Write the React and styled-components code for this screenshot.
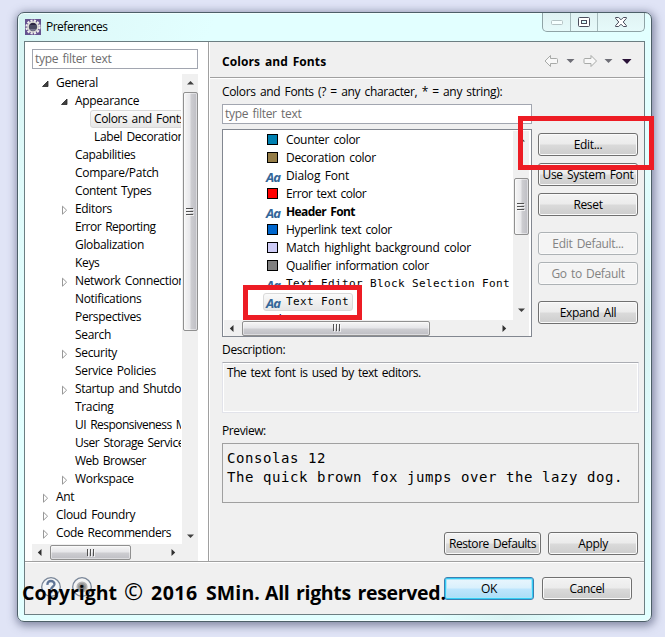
import React from 'react';
import styled, { createGlobalStyle, css } from 'styled-components';

const Global = createGlobalStyle`
  * { box-sizing: border-box; }
  html, body { margin: 0; }
  body {
    height: 637px;
    overflow: hidden;
    background: #e0e4f6;
    color: #000;
    font: 12px/18px "Open Sans", "Noto Sans", sans-serif;
    letter-spacing: -0.33px;
    word-spacing: 1.5px;
    white-space: pre;
  }
`;

const Desktop = styled.div`
  position: relative;
  width: 665px;
  height: 637px;
  padding: 12px 0 0 17px;
`;

const Window = styled.div`
  display: flex;
  flex-direction: column;
  width: 635px;
  height: 610px;
  padding: 0 6px 6px;
  border: 1px solid #4d5f68;
  border-radius: 7px;
  background: linear-gradient(115deg, #d6f3f2 0, #dffafa 9%, #e2ffff 22%, #e2ffff 76%, #d9f3f3 84%, #e2ffff 93%);
  box-shadow: inset 0 0 0 1px #f0ffff, 1px 2px 9px 2px rgba(60, 68, 100, 0.55);
`;

const TitleBar = styled.div`
  display: flex;
  height: 28px;
  flex: none;
`;

const TitleText = styled.div`
  flex: 1;
  padding: 5px 0 0 5px;
  letter-spacing: -0.5px;
`;

const TitleIcon = styled.svg`
  width: 16px;
  height: 16px;
  margin: 6px 0 0 1px;
`;

const Controls = styled.div`
  display: flex;
  width: 103px;
  height: 19px;
  border: 1px solid #8fa3a6;
  border-top: 0;
  border-radius: 0 0 5px 5px;
  background: linear-gradient(#e0f2f3, #e6fafa);
`;

const Control = styled.div`
  display: flex;
  align-items: center;
  justify-content: center;
  width: ${(p) => p.$w}px;
  border-right: ${(p) => (p.$last ? 0 : '1px solid #a5babc')};
`;

const Body = styled.div`
  display: flex;
  flex-direction: column;
  width: 621px;
  height: 574px;
  border: 1px solid #6c7e82;
  background: #f0f0f0;
`;

const Panes = styled.div`
  display: flex;
  height: 519px;
  flex: none;
`;

const Sidebar = styled.div`
  width: 184px;
  padding: 7px 10px 0 7px;
  border-right: 1px solid #a0a0a0;
  background: #fff;
`;

const FilterBox = styled.div`
  height: 20px;
  padding: 0 2px;
  border: 1px solid #a2a6b0;
  background: #fff;
  color: #6d6d6d;
  line-height: 18px;
  letter-spacing: -0.3px;
`;

const TreeGrid = styled.div`
  display: grid;
  grid-template-columns: 150px 16px;
  grid-template-rows: 470px 17px;
  margin-top: 5px;
`;

const TreeRows = styled.div`
  overflow: hidden;
  width: 149px;
`;

const TreeRow = styled.div`
  display: flex;
  align-items: center;
  height: 18px;
  padding-left: ${(p) => 7 + 19 * p.$level}px;
`;

const Twisty = styled.svg`
  flex: none;
  width: 9px;
  height: 10px;
  margin: 2px 4px 0 2px;
`;

const TreeLabel = styled.span`
  flex: none;
  height: 18px;
  padding: 0 4px 0 3px;
  margin-left: -2px;
  border: 1px solid transparent;
  border-radius: 3px;
  line-height: 16px;
  letter-spacing: ${(p) => p.$ls || 'inherit'};
  ${(p) =>
    p.$selected &&
    css`
      border-color: #d9d9d9;
      background: linear-gradient(#fafafa, #e6e6e6);
    `}
`;

const VScroll = styled.div`
  display: flex;
  flex-direction: column;
  align-items: center;
  background: #f0f0f0;
`;

const VArrow = styled.svg`
  flex: none;
  width: 9px;
  height: 5px;
  margin-top: ${(p) => p.$mt}px;
`;

const VThumb = styled.div`
  display: flex;
  align-items: center;
  justify-content: center;
  flex: none;
  width: 15px;
  height: ${(p) => p.$h}px;
  margin-top: ${(p) => p.$mt}px;
  border: 1px solid #909090;
  border-radius: 2px;
  background: linear-gradient(90deg, #f6f6f6 0, #e8e8eb 45%, #cdcdd1 55%, #bebec4 100%);
  box-shadow: inset 0 0 0 1px rgba(255, 255, 255, 0.45);
`;

const HScroll = styled.div`
  display: flex;
  align-items: center;
  background: #f0f0f0;
`;

const HArrow = styled.svg`
  flex: none;
  width: 5px;
  height: 9px;
  margin-left: ${(p) => p.$ml}px;
`;

const HThumb = styled.div`
  display: flex;
  align-items: center;
  justify-content: center;
  flex: none;
  width: ${(p) => p.$w}px;
  height: 15px;
  margin-left: ${(p) => p.$ml}px;
  border: 1px solid #909090;
  border-radius: 2px;
  background: linear-gradient(#f6f6f6 0, #e6e6e9 45%, #cdcdd1 55%, #bebec4 100%);
  box-shadow: inset 0 0 0 1px rgba(255, 255, 255, 0.45);
`;

const Corner = styled.div`
  background: #f0f0f0;
`;

const Main = styled.div`
  width: 435px;
  border-left: 1px solid #fff;
`;

const Header = styled.div`
  display: flex;
  align-items: center;
  height: 36px;
  padding: 2px 12px 0 12px;
  border-bottom: 1px solid #a0a0a0;
  box-shadow: 0 1px 0 #fff;
`;

const Heading = styled.div`
  flex: 1;
  padding-top: 2px;
  font-weight: bold;
  letter-spacing: 0.1px;
`;

const NavIcons = styled.svg`
  width: 90px;
  height: 14px;
`;

const Content = styled.div`
  padding: 5px 6px 0 12px;
`;

const Caption = styled.div`
  height: ${(p) => p.$h}px;
  padding-top: ${(p) => p.$pt || 0}px;
  letter-spacing: ${(p) => p.$ls || 'inherit'};
`;

const FontRow = styled.div`
  display: grid;
  grid-template-columns: 310px 100px;
  column-gap: 6px;
  height: 233px;
`;

const FontTree = styled.div`
  display: grid;
  grid-template-columns: 289px 16px;
  grid-template-rows: 189px 16px;
  height: 208px;
  margin-top: 5px;
  padding: 1px 0 0 1px;
  border: 1px solid #828790;
  background: #fff;
`;

const FontItems = styled.div`
  overflow: hidden;
`;

const FontItem = styled.div`
  display: flex;
  align-items: center;
  width: max-content;
  height: 18px;
  margin-left: 39px;
  padding: 0 3px 0 3px;
  border: 1px solid transparent;
  border-radius: 3px;
  line-height: 16px;
  font-weight: ${(p) => (p.$bold ? 'bold' : 'normal')};
  letter-spacing: ${(p) => p.$ls || 'inherit'};
  ${(p) =>
    p.$mono &&
    css`
      font-family: "DejaVu Sans Mono", monospace;
      font-size: 11px;
      letter-spacing: 0.378px;
      word-spacing: 0;
    `}
  ${(p) =>
    p.$selected &&
    css`
      border-color: #d9d9d9;
      background: linear-gradient(#fafafa, #e6e6e6);
    `}
`;

const Swatch = styled.div`
  width: 11px;
  height: 11px;
  margin: 0 8px 1px 0;
  border: 1px solid #000;
  background: ${(p) => p.$color};
`;

const FontGlyph = styled.span`
  width: 20px;
  margin-left: -1px;
  padding-top: 1px;
  color: #336699;
  font: italic bold 13px/14px "Noto Sans", "Open Sans", sans-serif;
  letter-spacing: -0.8px;
`;

const FolderRow = styled(FontItem)`
  margin-left: 20px;
`;

const FolderIcon = styled.div`
  width: 11px;
  height: 8px;
  margin: 2px 5px 0 0;
  border: 1px solid #c08a3e;
  background: #f1d28a;
`;

const ButtonColumn = styled.div`
  display: flex;
  flex-direction: column;
  padding-top: 29px;
`;

const Button = styled.button`
  width: ${(p) => p.$w || 100}px;
  height: 23px;
  margin: ${(p) => p.$mt || 0}px 0 0;
  padding: 1px 0 0;
  border: 1px solid #707070;
  border-radius: 3px;
  background: linear-gradient(#f3f3f3 0, #ebebeb 48%, #dadada 52%, #cdcdcd 100%);
  box-shadow: inset 0 0 0 1px #fafafa;
  color: #000;
  font: inherit;
  line-height: 20px;
  letter-spacing: ${(p) => p.$ls || 'inherit'};
  word-spacing: inherit;
  white-space: pre;
  ${(p) =>
    p.$off &&
    css`
      border-color: #adb2b5;
      background: #f4f4f4;
      color: #838383;
    `}
  ${(p) =>
    p.$primary &&
    css`
      border-color: #3c7fb1;
      background: linear-gradient(#eaf6fd 0, #d9f0fc 48%, #bee6fd 52%, #abdcf5 100%);
      box-shadow: inset 0 0 0 1px #35cdf5, inset 0 0 0 2px #a8e6fa;
    `}
`;

const DescriptionBox = styled.div`
  width: 417px;
  height: 51px;
  padding: 1px 4px;
  border: 1px solid #e2e3ea;
  border-top-color: #abadb3;
  box-shadow: inset 0 0 0 1px #fff;
  letter-spacing: -0.45px;
`;

const PreviewBox = styled.div`
  width: 417px;
  height: 60px;
  padding: 5px 4px;
  border: 1px solid #a0a0a0;
  font: 14px/19px "DejaVu Sans Mono", monospace;
  letter-spacing: 0.572px;
  word-spacing: 0;
`;

const PageActions = styled.div`
  display: flex;
  justify-content: flex-end;
  gap: 7px;
  margin-top: 29px;
`;

const Footer = styled.div`
  display: flex;
  flex: 1;
  padding: 14px 12px 0 15px;
  border-top: 1px solid #a0a0a0;
  box-shadow: inset 0 1px 0 #fff;
`;

const HelpIcons = styled.svg`
  width: 60px;
  height: 24px;
  margin: -1px auto 0 0;
`;

const FooterButtons = styled.div`
  display: flex;
  gap: 8px;
  margin-top: 1px;
`;

const Watermark = styled.div`
  position: absolute;
  left: 22px;
  top: 578px;
  display: flex;
  align-items: baseline;
  font: bold 19.5px/26px "Open Sans", "Noto Sans", sans-serif;
  letter-spacing: 0;
  word-spacing: 1.7px;
`;

const WatermarkPart = styled.span`
  width: ${(p) => p.$w}px;
  letter-spacing: ${(p) => p.$ls || 'inherit'};
`;

const CopySign = styled(WatermarkPart)`
  font-size: 23px;
  font-weight: normal;
`;

const Highlight = styled.div`
  position: absolute;
  left: ${(p) => p.$x}px;
  top: ${(p) => p.$y}px;
  width: ${(p) => p.$w}px;
  height: ${(p) => p.$h}px;
  border: 5px solid #ed1c24;
`;

const NAV = [
  ['General', 0, 'open'],
  ['Appearance', 1, 'open', '-0.3px'],
  ['Colors and Fonts', 2, 'sel', '-0.38px'],
  ['Label Decorations', 2, '', '-0.38px'],
  ['Capabilities', 1],
  ['Compare/Patch', 1, '', '-0.27px'],
  ['Content Types', 1, '', '-0.42px'],
  ['Editors', 1, 'closed'],
  ['Error Reporting', 1, '', '-0.5px'],
  ['Globalization', 1],
  ['Keys', 1],
  ['Network Connections', 1, 'closed'],
  ['Notifications', 1],
  ['Perspectives', 1],
  ['Search', 1],
  ['Security', 1, 'closed'],
  ['Service Policies', 1],
  ['Startup and Shutdown', 1, 'closed'],
  ['Tracing', 1],
  ['UI Responsiveness Monitoring', 1, '', '-0.52px'],
  ['User Storage Service', 1, '', '-0.45px'],
  ['Web Browser', 1, '', '-0.5px'],
  ['Workspace', 1, 'closed'],
  ['Ant', 0, 'closed'],
  ['Cloud Foundry', 0, 'closed'],
  ['Code Recommenders', 0, 'closed', '-0.38px'],
];

const FONTS = [
  { label: 'Counter color', color: '#0080b0' },
  { label: 'Decoration color', color: '#957d47', ls: '-0.3px' },
  { label: 'Dialog Font', ls: '-0.15px' },
  { label: 'Error text color', color: '#ff0000', ls: '-0.45px' },
  { label: 'Header Font', bold: true, ls: '-0.58px' },
  { label: 'Hyperlink text color', color: '#0066cc' },
  { label: 'Match highlight background color', color: '#ceccf7', ls: '-0.22px' },
  { label: 'Qualifier information color', color: '#808080' },
  { label: 'Text Editor Block Selection Font', mono: true },
  { label: 'Text Font', mono: true, selected: true },
];

function TreeTwisty({ state }) {
  return (
    <Twisty viewBox="0 0 9 10">
      {state === 'open' && <path d="M7 2v5.500h-5.500z" fill="#404040" stroke="#262626" strokeWidth=".8" />}
      {state === 'closed' && <path d="M2.5 1.2v8L6.6 5.2z" fill="#fff" stroke="#989898" />}
    </Twisty>
  );
}

function VerticalArrow({ up, mt }) {
  return (
    <VArrow $mt={mt} viewBox="0 0 9 5">
      <path d={up ? 'M1 4.5L4.5 1L8 4.5z' : 'M1 .5h7L4.5 4z'} fill="#404040" />
    </VArrow>
  );
}

function HorizontalArrow({ left, ml }) {
  return (
    <HArrow $ml={ml} viewBox="0 0 5 9">
      <path d={left ? 'M4.5 1v7L.8 4.5z' : 'M.5 1v7L4.2 4.5z'} fill="#303030" />
    </HArrow>
  );
}

function Grip({ vertical }) {
  return vertical ? (
    <svg width="8" height="9" viewBox="0 0 8 9">
      <path d="M0 1.5h7M0 4.5h7M0 7.5h7" stroke="#505050" />
      <path d="M1 2.5h7M1 5.5h7M1 8.5h7" stroke="#fff" strokeOpacity=".7" />
    </svg>
  ) : (
    <svg width="9" height="8" viewBox="0 0 9 8">
      <path d="M1.5 0v7M4.5 0v7M7.5 0v7" stroke="#505050" />
      <path d="M2.5 1v7M5.5 1v7M8.5 1v7" stroke="#fff" strokeOpacity=".7" />
    </svg>
  );
}

export default function App() {
  return (
    <Desktop>
      <Global />
      <Window>
        <TitleBar>
          <TitleIcon viewBox="0 0 16 16">
            <rect width="16" height="16" fill="#66528f" />
            <circle cx="8" cy="8" r="6.5" fill="none" stroke="#f0f0ee" strokeWidth="2.200" strokeDasharray="2.2 1.203" />
            <circle cx="8" cy="8" r="5" fill="#4a4a62" stroke="#deded8" strokeWidth="1.600" />
            <path d="M4.500 6a4.200 4.200 0 0 1 7 0z" fill="#2c2440" />
            <path d="M4.500 10a4.200 4.200 0 0 0 7 0z" fill="#777790" />
          </TitleIcon>
          <TitleText>Preferences</TitleText>
          <Controls>
            <Control $w={28}>
              <svg width="12" height="5"><rect x=".5" y=".5" width="11" height="4" rx="1" fill="#f6ffff" stroke="#b4c2c4" /></svg>
            </Control>
            <Control $w={27}>
              <svg width="12" height="10"><rect x=".5" y=".5" width="11" height="9" rx="1" fill="#fff" stroke="#4a4c5c" /><rect x="3.5" y="3.5" width="5" height="3" fill="#dff" stroke="#4a4c5c" /></svg>
            </Control>
            <Control $w={46} $last>
              <svg width="12" height="10" viewBox="0 0 12 10">
                <path d="M.6.5h3.100L6 2.800 8.300.5h3.100v.9L8.200 5l3.200 3.600v.9H8.300L6 7.200 3.700 9.500H.6v-.9L3.800 5 .6 1.400z" fill="#fff" stroke="#4a4c5c" />
              </svg>
            </Control>
          </Controls>
        </TitleBar>
        <Body>
          <Panes>
            <Sidebar>
              <FilterBox>type filter text</FilterBox>
              <TreeGrid>
                <TreeRows>
                  {NAV.map(([label, level, state, ls]) => (
                    <TreeRow key={label} $level={level}>
                      <TreeTwisty state={state} />
                      <TreeLabel $selected={state === 'sel'} $ls={ls}>{label}</TreeLabel>
                    </TreeRow>
                  ))}
                </TreeRows>
                <VScroll>
                  <VerticalArrow up mt={6} />
                  <VThumb $h={239} $mt={7}><Grip vertical /></VThumb>
                  <VerticalArrow mt={203} />
                </VScroll>
                <HScroll>
                  <HorizontalArrow left ml={5} />
                  <HThumb $w={81} $ml={8}><Grip /></HThumb>
                  <HorizontalArrow ml={40} />
                </HScroll>
                <Corner />
              </TreeGrid>
            </Sidebar>
            <Main>
              <Header>
                <Heading>Colors and Fonts</Heading>
                <NavIcons viewBox="0 0 90 14">
                  <path d="M3 7l5.500-5.500v3h6q1 0 1 1v3q0 1-1 1h-6v3z" fill="#f8f8f8" stroke="#a8aaa8" />
                  <path d="M24.500 5h8l-4 4z" fill="#6e6e76" />
                  <path d="M54.500 7l-5.500-5.500v3h-6q-1 0-1 1v3q0 1 1 1h6v3z" fill="#f8f8f8" stroke="#a8aaa8" />
                  <path d="M62.500 5h8l-4 4z" fill="#6e6e76" />
                  <path d="M80 5h9.500l-4.500 5z" fill="#2a1238" />
                </NavIcons>
              </Header>
              <Content>
                <Caption $h={21}>Colors and Fonts (? = any character, * = any string):</Caption>
                <FontRow>
                  <div>
                    <FilterBox>type filter text</FilterBox>
                    <FontTree>
                      <FontItems>
                        {FONTS.map((f) => (
                          <FontItem key={f.label} $bold={f.bold} $mono={f.mono} $selected={f.selected} $ls={f.ls}>
                            {f.color ? <Swatch $color={f.color} /> : <FontGlyph>Aa</FontGlyph>}
                            {f.label}
                          </FontItem>
                        ))}
                        <FolderRow><FolderIcon />Debug</FolderRow>
                      </FontItems>
                      <VScroll>
                        <VerticalArrow up mt={6} />
                        <VThumb $h={57} $mt={36}><Grip vertical /></VThumb>
                        <VerticalArrow mt={73} />
                      </VScroll>
                      <HScroll>
                        <HorizontalArrow left ml={5} />
                        <HThumb $w={188} $ml={8}><Grip /></HThumb>
                        <HorizontalArrow ml={72} />
                      </HScroll>
                      <Corner />
                    </FontTree>
                  </div>
                  <ButtonColumn>
                    <Button>Edit...</Button>
                    <Button $mt={7}>Use System Font</Button>
                    <Button $mt={7}>Reset</Button>
                    <Button $mt={16} $off>Edit Default...</Button>
                    <Button $mt={7} $off>Go to Default</Button>
                    <Button $mt={16}>Expand All</Button>
                  </ButtonColumn>
                </FontRow>
                <Caption $h={25} $pt={4}>Description:</Caption>
                <DescriptionBox>The text font is used by text editors.</DescriptionBox>
                <Caption $h={30} $pt={9} $ls="-0.4px">Preview:</Caption>
                <PreviewBox>{'Consolas 12\nThe quick brown fox jumps over the lazy dog.'}</PreviewBox>
                <PageActions>
                  <Button $w={97} $ls="-0.45px">Restore Defaults</Button>
                  <Button $w={90}>Apply</Button>
                </PageActions>
              </Content>
            </Main>
          </Panes>
          <Footer>
            <HelpIcons viewBox="0 0 60 24">
              <circle cx="11" cy="12" r="9.300" fill="#f4f6f8" stroke="#7a8799" strokeWidth="1.300" />
              <path d="M7.500 9.800c-.6-5.200 7.400-4.800 6.900-.4-.3 2.200-3.200 2.300-3.200 4.900M11.200 16v2.300" fill="none" stroke="#5f7496" strokeWidth="2.400" />
              <circle cx="42" cy="12" r="9.300" fill="#f4f4f4" stroke="#7a8799" strokeWidth="1.300" />
              <circle cx="42" cy="12" r="4.800" fill="#999" stroke="#b4b4b4" strokeWidth="1.500" />
              <circle cx="42" cy="12" r="2.500" fill="#777" />
            </HelpIcons>
            <FooterButtons>
              <Button $w={90} $primary>OK</Button>
              <Button $w={90}>Cancel</Button>
            </FooterButtons>
          </Footer>
        </Body>
      </Window>
      <Watermark>
        <WatermarkPart $w={102}>Copyright</WatermarkPart>
        <CopySign $w={27}>©</CopySign>
        <WatermarkPart $w={55} $ls="0.5px">2016</WatermarkPart>
        <WatermarkPart $w={59} $ls="0.1px">SMin.</WatermarkPart>
        <WatermarkPart $w={182} $ls="-0.3px">All rights reserved.</WatermarkPart>
      </Watermark>
      <Highlight $x={518} $y={116} $w={136} $h={54} />
      <Highlight $x={243} $y={285} $w={119} $h={35} />
    </Desktop>
  );
}
